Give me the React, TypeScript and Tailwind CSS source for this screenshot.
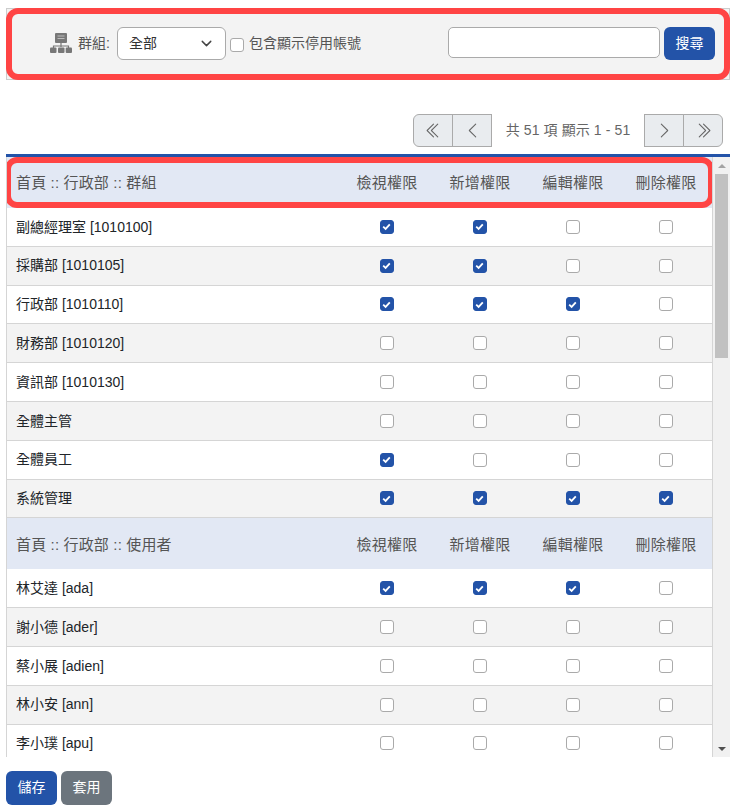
import { BsChevronDoubleLeft, BsChevronDoubleRight, BsChevronLeft, BsChevronRight } from "react-icons/bs";
import { ChevronDown } from "lucide-react";

const FONT = "font-['Liberation_Sans','Noto_Sans_CJK_TC',sans-serif]";

type Row = { name: string; p: [number, number, number, number] };

const groups: Row[] = [
  { name: "副總經理室 [1010100]", p: [1, 1, 0, 0] },
  { name: "採購部 [1010105]", p: [1, 1, 0, 0] },
  { name: "行政部 [1010110]", p: [1, 1, 1, 0] },
  { name: "財務部 [1010120]", p: [0, 0, 0, 0] },
  { name: "資訊部 [1010130]", p: [0, 0, 0, 0] },
  { name: "全體主管", p: [0, 0, 0, 0] },
  { name: "全體員工", p: [1, 0, 0, 0] },
  { name: "系統管理", p: [1, 1, 1, 1] },
];
const users: Row[] = [
  { name: "林艾達 [ada]", p: [1, 1, 1, 0] },
  { name: "謝小德 [ader]", p: [0, 0, 0, 0] },
  { name: "蔡小展 [adien]", p: [0, 0, 0, 0] },
  { name: "林小安 [ann]", p: [0, 0, 0, 0] },
  { name: "李小璞 [apu]", p: [0, 0, 0, 0] },
];

function Check({ on }: { on: boolean }) {
  return (
    <span className={`w-[14px] h-[14px] rounded-[3px] flex items-center justify-center border ${on ? "bg-[#2353a8] border-[#2353a8]" : "bg-white border-[#aaa]"}`}>
      {on && (
        <svg viewBox="0 0 12 12" className="w-[11px] h-[11px]">
          <path d="M2.4 6.2 L5 8.6 L9.6 3.6" fill="none" stroke="#fff" strokeWidth="2" />
        </svg>
      )}
    </span>
  );
}

function SitemapIcon() {
  return (
    <svg viewBox="0 0 22 20" className="w-[22px] h-[20px] text-[#777]">
      <rect x="5" y="0" width="12" height="10" rx="1" fill="currentColor" />
      <rect x="7.5" y="2.5" width="7" height="1" fill="#bbb" />
      <rect x="7.5" y="5" width="7" height="1" fill="#bbb" />
      <path d="M11 10v4M3.5 15v-2h15v2" fill="none" stroke="currentColor" strokeWidth="1.2" />
      <rect x="0" y="14.5" width="6.5" height="5.5" rx="1" fill="currentColor" />
      <rect x="8" y="14.5" width="6.5" height="5.5" rx="1" fill="currentColor" />
      <rect x="15.7" y="14.5" width="6.3" height="5.5" rx="1" fill="currentColor" />
    </svg>
  );
}

function HeaderRow({ title, ring }: { title: string; ring?: boolean }) {
  return (
    <div className={`relative grid grid-cols-[1fr_93px_93px_93px_93px] items-center h-[51px] bg-[#e2e8f4] text-[15px] text-[#555] tracking-[0.3px] shrink-0 ${ring ? "pt-px" : "pt-[2px]"}`}>
      <div className="pl-[9px] tracking-[0.15px]">{title}</div>
      {["檢視權限", "新增權限", "編輯權限", "刪除權限"].map((t) => (
        <div key={t} className="text-center pl-px">{t}</div>
      ))}
      {ring && <div className="absolute inset-x-[-2px] top-0 bottom-0 border-[6px] border-[#ff4444] rounded-[12px]" />}
    </div>
  );
}

function DataRow({ row, odd }: { row: Row; odd: boolean }) {
  return (
    <div className={`grid grid-cols-[1fr_93px_93px_93px_93px] items-center h-[38.8px] shrink-0 border-b border-[#d5d5d5] text-[14px] text-[#212529] ${odd ? "bg-[#f3f3f3]" : "bg-white"}`}>
      <div className="pl-[9px] pt-[0.5px]">{row.name}</div>
      {row.p.map((v, i) => (
        <div key={i} className="flex justify-center">
          <Check on={!!v} />
        </div>
      ))}
    </div>
  );
}

function PagerBtn({ children, className }: { children: React.ReactNode; className: string }) {
  return (
    <button className={`w-[40px] h-[33px] flex items-center justify-center bg-[#e9ecef] border border-[#aaa] text-[#666] text-[17px] ${className}`}>
      {children}
    </button>
  );
}

export default function App() {
  return (
    <div className={`${FONT} w-[735px] h-[812px] bg-white pl-[6px] pr-[5px] pt-[8px] overflow-hidden`}>
      <div className="relative h-[72px] bg-[#f3f3f3] border border-[#ccc] flex items-center pl-[43px] pb-[2px] text-[14px] text-[#555]">
        <SitemapIcon />
        <span className="ml-[6px] w-[39px]">群組:</span>
        <div className="w-[109px] h-[33px] bg-white border border-[#aaa] rounded-[6px] flex items-center justify-between pl-[11px] pr-[10px] text-[#333]">
          <span>全部</span>
          <ChevronDown className="w-[17px] h-[17px] text-[#444]" />
        </div>
        <span className="ml-[4px] mt-[3px]"><Check on={false} /></span>
        <span className="ml-[5px] w-[199px]">包含顯示停用帳號</span>
        <div className="w-[212px] h-[31px] bg-white border border-[#aaa] rounded-[5px] mb-[2px]" />
        <button className="ml-[4px] w-[51px] h-[33px] bg-[#2353a8] text-white rounded-[6px]">搜尋</button>
        <div className="absolute inset-[-1px] border-[6px] border-[#ff4444] rounded-[12px]" />
      </div>

      <div className="mt-[34px] h-[33px] flex items-center justify-end pr-[7px]">
        <div className="flex">
          <PagerBtn className="rounded-l-[6px]"><BsChevronDoubleLeft /></PagerBtn>
          <PagerBtn className="-ml-px"><BsChevronLeft /></PagerBtn>
        </div>
        <div className="w-[152px] text-center text-[14px] text-[#666] tracking-[0.1px]">共 51 項 顯示 1 - 51</div>
        <div className="flex">
          <PagerBtn className=""><BsChevronRight /></PagerBtn>
          <PagerBtn className="-ml-px rounded-r-[6px]"><BsChevronDoubleRight /></PagerBtn>
        </div>
      </div>

      <div className="mt-[7px] border-t-[3px] border-[#2353a8] h-[603px] flex">
        <div className="flex-1 min-w-0 border-l border-[#d5d5d5] flex flex-col overflow-hidden">
          <HeaderRow title="首頁 :: 行政部 :: 群組" ring />
          {groups.map((r, i) => <DataRow key={r.name} row={r} odd={i % 2 === 1} />)}
          <HeaderRow title="首頁 :: 行政部 :: 使用者" />
          {users.map((r, i) => <DataRow key={r.name} row={r} odd={i % 2 === 1} />)}
        </div>
        <div className="w-[18px] shrink-0 bg-[#f1f1f1] border-l border-[#d5d5d5] flex flex-col items-center">
          <div className="h-[17px] flex items-center justify-center">
            <div className="w-0 h-0 border-x-[4px] border-x-transparent border-b-[4px] border-b-[#a3a3a3]" />
          </div>
          <div className="w-[13px] h-[184px] bg-[#c1c1c1]" />
          <div className="flex-1" />
          <div className="h-[17px] flex items-center justify-center">
            <div className="w-0 h-0 border-x-[4px] border-x-transparent border-t-[4px] border-t-[#505050]" />
          </div>
        </div>
      </div>

      <div className="mt-[14px] flex gap-[4px] text-[14px] text-white">
        <button className="w-[51px] h-[34px] pb-px bg-[#2353a8] rounded-[6px]">儲存</button>
        <button className="w-[51px] h-[34px] pb-px bg-[#6c757d] rounded-[6px]">套用</button>
      </div>
    </div>
  );
}
